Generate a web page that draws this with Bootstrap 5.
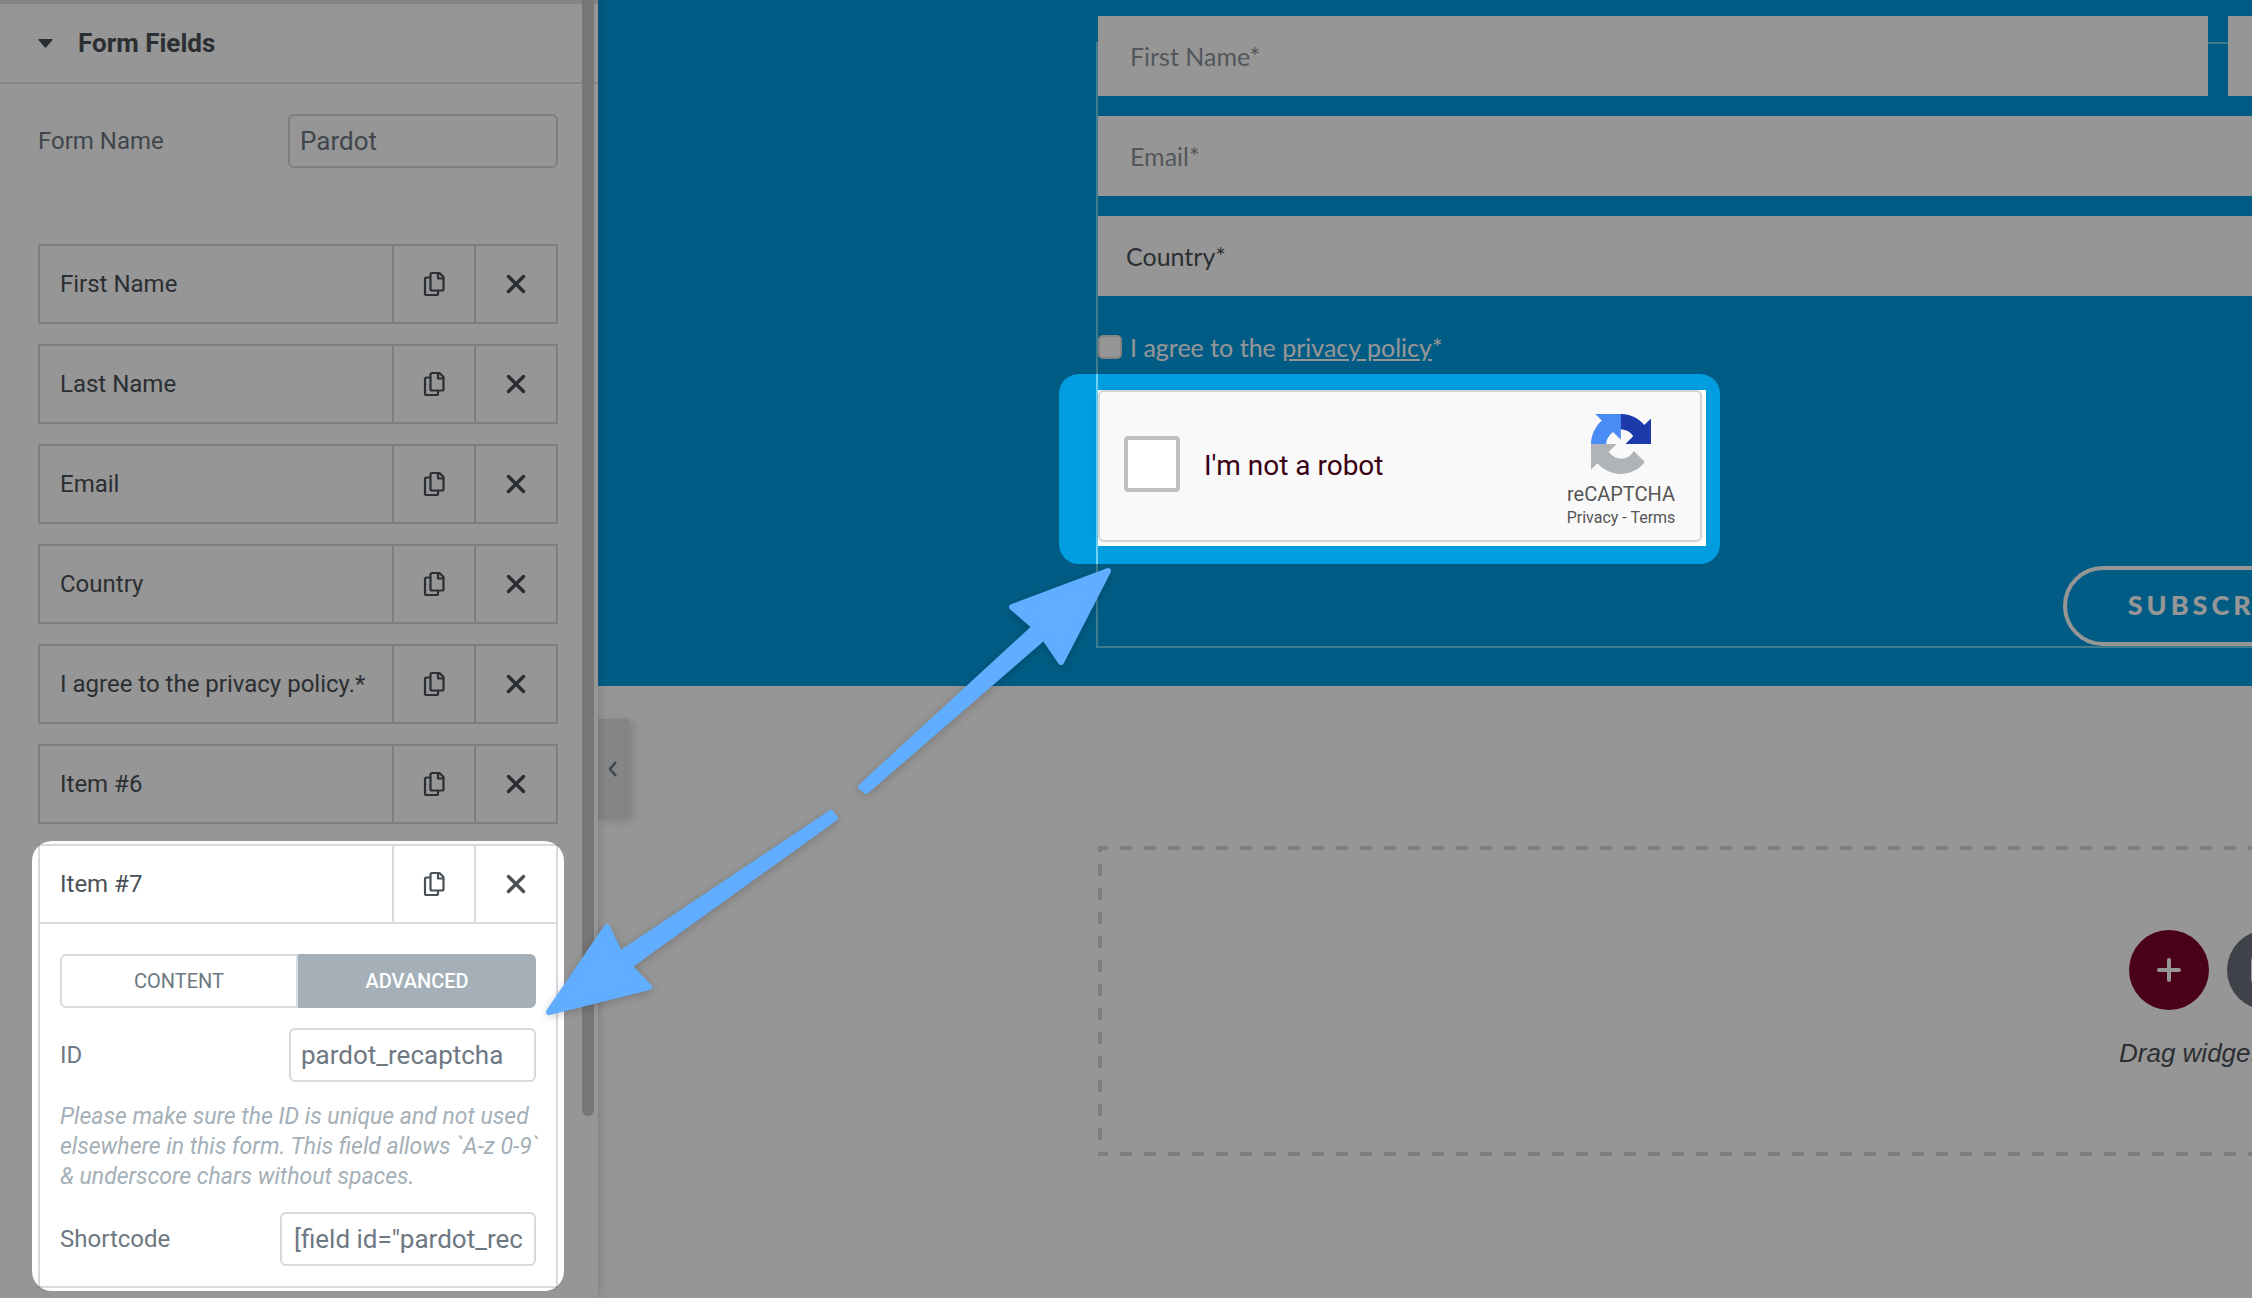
<!DOCTYPE html>
<html lang="en">
<head>
<meta charset="utf-8">
<meta name="viewport" content="width=device-width, initial-scale=1">
<title>Form editor</title>
<link href="https://cdn.jsdelivr.net/npm/bootstrap@5.3.0/dist/css/bootstrap.min.css" rel="stylesheet">
<style>
:root { --line: #d5dadf; --ink: #495157; --label: #6d7882; --soft: #a4afb7; --sky: #009de0; }
body { font-family: Roboto, sans-serif; font-size: 24px; line-height: 32px; color: var(--ink); }
.editor { height: 100vh; }
/* panel */
.panel { width: 598px; border-top: 4px solid #dde1e4; box-shadow: 0 0 10px rgba(0,0,0,.2); z-index: 2; }
.panel-head { height: 80px; padding-left: 38px; border-bottom: 2px solid #e1e5e8; gap: 25px; font-size: 26px; font-weight: 700; color: var(--ink); }
.panel-body { padding: 30px 40px 0 38px; }
.panel-thumb { top: -4px; right: 4px; width: 12px; height: 1116px; background: #c9c9c9; border-radius: 0 0 6px 6px; }
.lbl { color: var(--label); }
.field { height: 54px; border: 2px solid var(--line); border-radius: 6px; padding: 0 10px; font-size: 26px; color: var(--label); box-shadow: none; }
.field-name { width: 270px; }
.field-id { width: 247px; }
.field-code { width: 256px; padding: 0 12px; }
.fields { margin-top: 76px; gap: 20px; }
.entry { border: 2px solid var(--line); }
.entry-top { height: 76px; }
.entry-top button { background: none; border: 0; padding: 0; color: inherit; }
.entry-top .entry-name { padding-left: 20px; }
.entry-top .entry-tool { width: 82px; border-left: 2px solid var(--line); }
.entry-tool svg { display: block; margin: 0 auto; }
.entry-body { border-top: 2px solid var(--line); padding: 30px 20px 20px; gap: 20px; }
.tabs button { flex: 1 1 0; height: 54px; font-size: 20px; line-height: 24px; border: 2px solid var(--line); background: #fff; color: var(--label); border-radius: 6px 0 0 6px; }
.tabs button.on { background: var(--soft); border-color: var(--soft); color: #fff; border-radius: 0 6px 6px 0; font-weight: 500; }
.hint { font-size: 23px; line-height: 30px; font-style: italic; color: var(--soft); white-space: nowrap; }
/* canvas */
.stage { min-width: 0; }
.wide { width: 2240px; margin-left: 500px; }
.hero { background: var(--sky); height: 686px; padding-top: 16px; }
.hero-form { font-family: Lato, sans-serif; gap: 20px; }
.name-row { gap: 20px; }
.col-outline { left: -2px; top: 26px; right: 0; bottom: -2px; border: 2px solid #6cd4f2; }
.big { height: 80px; border: 0; border-radius: 0; background: #fff; padding: 0 32px; font-size: 25px; color: var(--ink); flex: 1 1 0; min-width: 0; }
.big::placeholder { color: #8d959c; opacity: 1; }
select.big { appearance: none; padding: 0 28px; }
.agree { color: #fff; font-size: 25px; height: 34px; gap: 8px; margin-top: 14px; margin-bottom: 2px; }
.agree a { color: #fff; }
.agree input { appearance: none; width: 24px; height: 24px; background: #fff; border: 2px solid #e6dfdc; border-radius: 5px; margin: 0; }
.captcha { width: 608px; height: 156px; background: #fff; margin-top: 4px; }
.captcha-box { width: 604px; height: 152px; border: 2px solid #d3d3d3; border-radius: 6px; background: #f9f9f9; padding: 0 20px 4px 24px; font-family: Roboto, sans-serif; box-shadow: 0 0 6px rgba(0,0,0,.08); }
.captcha-box input { appearance: none; width: 56px; height: 56px; margin: 0; border: 4px solid #bcc0c1; border-radius: 4px; background: #fff; }
.captcha-box label { font-size: 28px; line-height: 32px; color: #3b0014; padding: 4px 0 0 24px; }
.captcha-brand { width: 118px; color: #555; padding-top: 16px; }
.captcha-brand div { font-size: 20px; line-height: 24px; margin-top: 8px; }
.captcha-brand p { font-size: 16px; line-height: 24px; white-space: nowrap; }
.captcha-brand a { color: #555; text-decoration: none; }
.subscribe { align-self: center; width: 310px; height: 80px; border: 4px solid #fff; border-radius: 40px; background: none; color: #fff; font-size: 27px; font-weight: 900; letter-spacing: 4px; padding: 0 0 2px; }
.drop { margin-top: 160px; height: 310px; padding-top: 84px;
  background:
    repeating-linear-gradient(90deg, var(--line) 0 12px, transparent 12px 24px) -2px 0 / 100% 4px no-repeat,
    repeating-linear-gradient(90deg, var(--line) 0 12px, transparent 12px 24px) -2px 100% / 100% 4px no-repeat,
    repeating-linear-gradient(180deg, var(--line) 0 12px, transparent 12px 24px) 0 -6px / 4px 100% no-repeat; }
.rounds { gap: 18px; }
.round { width: 80px; height: 80px; border: 0; border-radius: 50%; background: #80002c; padding: 0; }
.round svg { display: block; margin: 0 auto; }
.round-alt { background: #6b727d; }
.drop-note { font-family: "Liberation Sans", sans-serif; font-style: italic; font-size: 26px; margin-top: 27px; color: var(--ink); }
.handle { left: 598px; top: 719px; width: 31px; height: 100px; border: 0; background: #e0e3e6; box-shadow: 4px 2px 10px rgba(0,0,0,.15); z-index: 1; color: var(--label); }
.handle svg { margin-left: 10px; }
.coach { inset: 0; width: 100%; height: 100%; z-index: 5; pointer-events: none; }
.arrows { filter: drop-shadow(0 2px 4px rgba(0,0,0,.2)); }
</style>
<script src="https://cdn.jsdelivr.net/npm/bootstrap@5.3.0/dist/js/bootstrap.bundle.min.js"></script>
</head>
<body>
<svg class="d-none">
  <symbol id="copy" viewBox="0 0 22 26"><g fill="none" stroke="currentColor" stroke-width="2.200" stroke-linejoin="round"><path d="M9 2h7.500l4 4V18q0 1.500-1.500 1.500H9q-1.500 0-1.500-1.500V3.500Q7.500 2 9 2zM15 2v5.500h5.500"/><path d="M7.500 6.500H3.500Q2 6.500 2 8v14.500Q2 24 3.500 24h10q1.500 0 1.500-1.500v-3"/></g></symbol>
  <symbol id="cross" viewBox="0 0 20 20"><path d="M2.500 2.500l15 15M17.500 2.500l-15 15" stroke="currentColor" stroke-width="3.400" stroke-linecap="round"/></symbol>
</svg>

<div class="editor d-flex position-relative overflow-hidden">
  <aside class="panel bg-white position-relative flex-shrink-0">
    <div class="panel-head d-flex align-items-center">
      <svg width="15" height="9" viewBox="0 0 15 9"><path d="M1 0h13q1 0 .5 1L8.500 8q-1 1-2 0L.5 1Q0 0 1 0z" fill="currentColor"/></svg>
      <span>Form Fields</span>
    </div>
    <div class="panel-body">
      <div class="d-flex justify-content-between align-items-center">
        <label class="lbl" for="formName">Form Name</label>
        <input class="form-control field field-name" id="formName" value="Pardot">
      </div>
      <div class="fields d-flex flex-column">
        <div class="entry"><div class="entry-top d-flex"><button class="entry-name flex-grow-1 text-start">First Name</button><button class="entry-tool" aria-label="Duplicate"><svg width="22" height="26"><use href="#copy"/></svg></button><button class="entry-tool" aria-label="Remove"><svg width="20" height="20"><use href="#cross"/></svg></button></div></div>
        <div class="entry"><div class="entry-top d-flex"><button class="entry-name flex-grow-1 text-start">Last Name</button><button class="entry-tool" aria-label="Duplicate"><svg width="22" height="26"><use href="#copy"/></svg></button><button class="entry-tool" aria-label="Remove"><svg width="20" height="20"><use href="#cross"/></svg></button></div></div>
        <div class="entry"><div class="entry-top d-flex"><button class="entry-name flex-grow-1 text-start">Email</button><button class="entry-tool" aria-label="Duplicate"><svg width="22" height="26"><use href="#copy"/></svg></button><button class="entry-tool" aria-label="Remove"><svg width="20" height="20"><use href="#cross"/></svg></button></div></div>
        <div class="entry"><div class="entry-top d-flex"><button class="entry-name flex-grow-1 text-start">Country</button><button class="entry-tool" aria-label="Duplicate"><svg width="22" height="26"><use href="#copy"/></svg></button><button class="entry-tool" aria-label="Remove"><svg width="20" height="20"><use href="#cross"/></svg></button></div></div>
        <div class="entry"><div class="entry-top d-flex"><button class="entry-name flex-grow-1 text-start">I agree to the privacy policy.*</button><button class="entry-tool" aria-label="Duplicate"><svg width="22" height="26"><use href="#copy"/></svg></button><button class="entry-tool" aria-label="Remove"><svg width="20" height="20"><use href="#cross"/></svg></button></div></div>
        <div class="entry"><div class="entry-top d-flex"><button class="entry-name flex-grow-1 text-start">Item #6</button><button class="entry-tool" aria-label="Duplicate"><svg width="22" height="26"><use href="#copy"/></svg></button><button class="entry-tool" aria-label="Remove"><svg width="20" height="20"><use href="#cross"/></svg></button></div></div>
        <div class="entry">
          <div class="entry-top d-flex"><button class="entry-name flex-grow-1 text-start">Item #7</button><button class="entry-tool" aria-label="Duplicate"><svg width="22" height="26"><use href="#copy"/></svg></button><button class="entry-tool" aria-label="Remove"><svg width="20" height="20"><use href="#cross"/></svg></button></div>
          <div class="entry-body d-flex flex-column">
            <div class="tabs d-flex"><button>CONTENT</button><button class="on">ADVANCED</button></div>
            <div class="d-flex justify-content-between align-items-center">
              <label class="lbl" for="fieldId">ID</label>
              <input class="form-control field field-id" id="fieldId" value="pardot_recaptcha">
            </div>
            <div class="hint">Please make sure the ID is unique and not used<br>elsewhere in this form. This field allows `A-z 0-9`<br>&amp; underscore chars without spaces.</div>
            <div class="d-flex justify-content-between align-items-center">
              <label class="lbl" for="shortcode">Shortcode</label>
              <input class="form-control field field-code" id="shortcode" value='[field id="pardot_recaptcha"]' readonly>
            </div>
          </div>
        </div>
      </div>
    </div>
    <div class="panel-thumb position-absolute"></div>
  </aside>

  <main class="stage flex-grow-1 overflow-hidden bg-white">
    <section class="hero">
      <form class="hero-form wide d-flex flex-column position-relative">
        <div class="col-outline position-absolute"></div>
        <div class="name-row d-flex position-relative">
          <input class="big" placeholder="First Name*" aria-label="First Name">
          <input class="big" placeholder="Last Name*" aria-label="Last Name">
        </div>
        <div class="d-flex position-relative"><input class="big" type="email" placeholder="Email*" aria-label="Email"></div>
        <div class="d-flex position-relative"><select class="big" aria-label="Country"><option>Country*</option></select></div>
        <div class="agree d-flex align-items-center position-relative">
          <input type="checkbox" id="agree"><label for="agree">I agree to the <a href="#">privacy policy</a>*</label>
        </div>
        <div class="captcha position-relative">
          <div class="captcha-box d-flex align-items-center">
            <input type="checkbox" id="robot"><label for="robot" class="flex-grow-1">I'm not a robot</label>
            <div class="captcha-brand text-center">
              <svg width="60" height="60" viewBox="0 0 64 64" class="d-block mx-auto"><path fill="#1c3aa9" d="M64 31.955l-.033-1.370V4.687l-7.160 7.160C50.948 4.674 42.033.093 32.050.093c-10.400 0-19.622 4.960-25.458 12.640l11.736 11.860a15.550 15.550 0 0 1 4.754-5.334c2.050-1.600 4.952-2.906 8.968-2.906.485 0 .860.057 1.135.163 4.976.393 9.288 3.140 11.828 7.124l-8.307 8.307L64 31.953"/><path fill="#4a8cf5" d="M31.862.094l-1.370.033H4.594l7.160 7.160C4.580 13.147 0 22.060 0 32.046c0 10.400 4.960 19.622 12.640 25.458L24.500 45.768a15.550 15.550 0 0 1-5.334-4.754c-1.600-2.050-2.906-4.952-2.906-8.968 0-.485.057-.860.163-1.135.393-4.976 3.140-9.288 7.124-11.828l8.307 8.307L31.860.095"/><path fill="#b0b4b6" d="M.001 32.045l.033 1.370v25.898l7.160-7.160c5.860 7.173 14.774 11.754 24.760 11.754 10.400 0 19.622-4.960 25.458-12.640l-11.736-11.860a15.550 15.550 0 0 1-4.754 5.334c-2.050 1.600-4.952 2.906-8.968 2.906-.485 0-.860-.057-1.135-.163-4.976-.393-9.288-3.140-11.828-7.124l8.307-8.307c-10.522.040-22.400.066-27.295-.005"/></svg>
              <div>reCAPTCHA</div>
              <p class="mb-0"><a href="#">Privacy</a> - <a href="#">Terms</a></p>
            </div>
          </div>
        </div>
        <button type="button" class="subscribe">SUBSCRIBE</button>
      </form>
    </section>
    <section class="drop wide d-flex flex-column align-items-center">
      <div class="rounds d-flex">
        <button class="round" aria-label="Add section"><svg width="24" height="24" viewBox="0 0 24 24"><path d="M12 2v20M2 12h20" stroke="#fff" stroke-width="4" stroke-linecap="round"/></svg></button>
        <button class="round round-alt" aria-label="Add template"><svg width="32" height="26" viewBox="0 0 32 26"><path d="M3 0h9l4 4h13q3 0 3 3v16q0 3-3 3H3q-3 0-3-3V3q0-3 3-3z" fill="#fff"/></svg></button>
      </div>
      <div class="drop-note">Drag widget here</div>
    </section>
  </main>

  <button class="handle position-absolute p-0" aria-label="Collapse panel"><svg width="10" height="16" viewBox="0 0 10 16" class="d-block"><path d="M8 1L2 8l6 7" fill="none" stroke="currentColor" stroke-width="2.500"/></svg></button>

  <!-- tour layer: dimmed page, two spotlights and the arrows that join them -->
  <svg class="coach position-absolute" aria-hidden="true">
    <mask id="spots"><rect width="100%" height="100%" fill="#fff"/><rect x="32" y="841" width="532" height="450" rx="20"/><rect x="1059" y="374" width="661" height="190" rx="20"/></mask>
    <rect width="100%" height="100%" fill="#000" fill-opacity=".41" mask="url(#spots)"/>
    <g class="arrows" fill="#61adff" stroke="#61adff" stroke-width="6" stroke-linejoin="round">
      <path d="M1108 571L1012 607L1035 627L861 787L866 791L1044 637L1061 662Z"/>
      <path d="M549 1012L607 927L620 954L831 813L835 818L629 966L649 987Z"/>
    </g>
  </svg>
</div>
</body>
</html>
